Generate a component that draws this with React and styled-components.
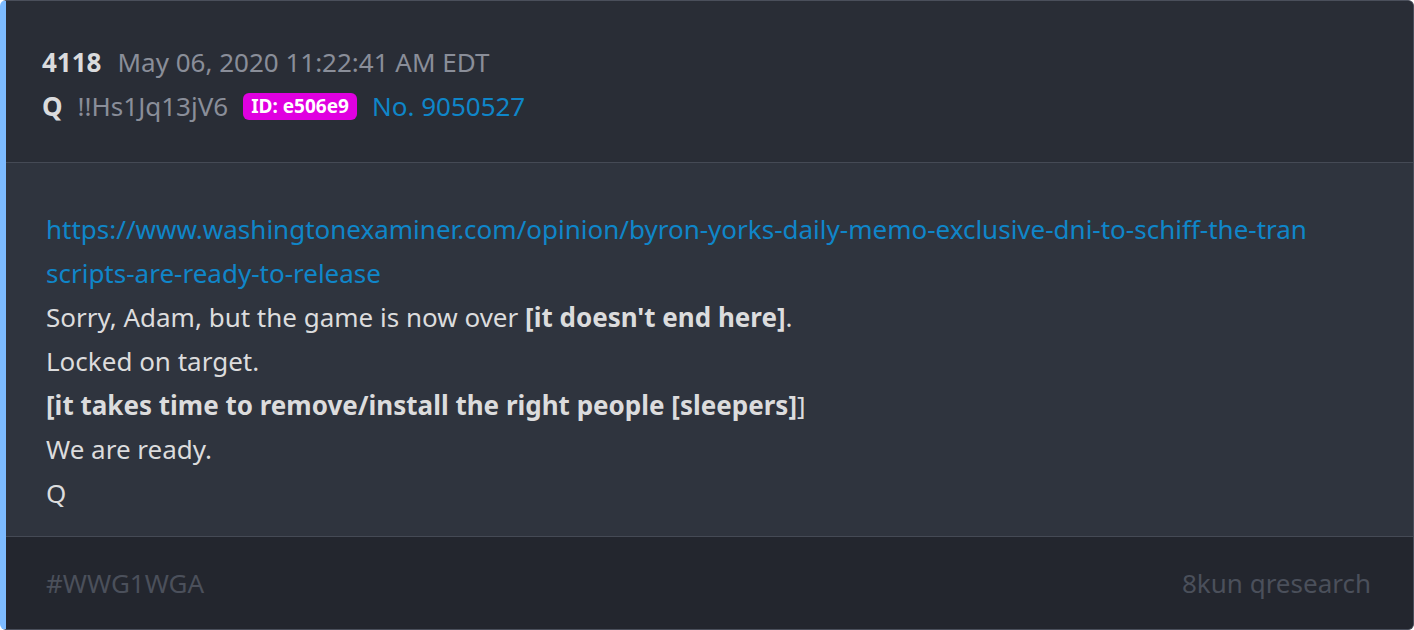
import React from "react";
import styled, { createGlobalStyle } from "styled-components";

const GlobalStyle = createGlobalStyle`
    html, body {
        margin: 0;
        padding: 0;
        background: #ffffff;
    }
    body {
        font-family: "Noto Sans", "Open Sans", sans-serif;
    }
`

const Card = styled.article`
    box-sizing: border-box;
    width: 1414px;
    height: 630px;
    display: flex;
    flex-direction: column;
    border: 1px solid #4a4f5b;
    border-left: 6px solid #7dbbff;
    border-radius: 6px;
    overflow: hidden;
    background: #2f343e;
`

const Header = styled.header`
    background: #292d36;
    padding: 39px 36px 34px 36px;
    border-bottom: 1px solid #454a55;
    font-size: 26px;
    line-height: 44px;
`

const Row = styled.div`
    display: flex;
    align-items: center;
    gap: ${(p) => p.$gap || 16}px;
`

const Strong = styled.span`
    color: #dadbdd;
    font-weight: 700;
`

const Muted = styled.span`
    color: #8a8e99;
`

const IdBadge = styled.span`
    background: #e000e0;
    color: #ffffff;
    font-weight: 700;
    font-size: 19px;
    line-height: 27px;
    padding: 0 8px;
    border-radius: 6px;
`

const PostLink = styled.a`
    color: #0f86c9;
    text-decoration: none;
`

const Body = styled.section`
    flex: 1;
    padding: 44px 104px 20px 40px;
    font-size: 26px;
    line-height: 44px;
    color: #dcdcdd;
    border-bottom: 1px solid #454a55;
`

const Line = styled.div`
    word-break: break-all;
`

const Bold = styled.b`
    font-weight: 700;
    color: #dcdcdd;
`

const Footer = styled.footer`
    background: #23262e;
    height: 92px;
    padding: 0 42px 0 40px;
    display: flex;
    align-items: center;
    justify-content: space-between;
    font-size: 26px;
    color: #4b505b;
`

export default function App() {
    return (
        <>
            <GlobalStyle />
            <Card>
                <Header>
                    <Row>
                        <Strong>4118</Strong>
                        <Muted>May 06, 2020 11:22:41 AM EDT</Muted>
                    </Row>
                    <Row $gap={15}>
                        <Strong>Q</Strong>
                        <Muted>!!Hs1Jq13jV6</Muted>
                        <IdBadge>ID: e506e9</IdBadge>
                        <PostLink href="#">No. 9050527</PostLink>
                    </Row>
                </Header>
                <Body>
                    <Line>
                        <PostLink href="#">https://www.washingtonexaminer.com/opinion/byron-yorks-daily-memo-exclusive-dni-to-schiff-the-transcripts-are-ready-to-release</PostLink>
                    </Line>
                    <Line>Sorry, Adam, but the game is now over <Bold>[it doesn't end here]</Bold>.</Line>
                    <Line>Locked on target.</Line>
                    <Line><Bold>[it takes time to remove/install the right people [sleepers]</Bold>]</Line>
                    <Line>We are ready.</Line>
                    <Line>Q</Line>
                </Body>
                <Footer>
                    <span>#WWG1WGA</span>
                    <span>8kun qresearch</span>
                </Footer>
            </Card>
        </>
    );
}
